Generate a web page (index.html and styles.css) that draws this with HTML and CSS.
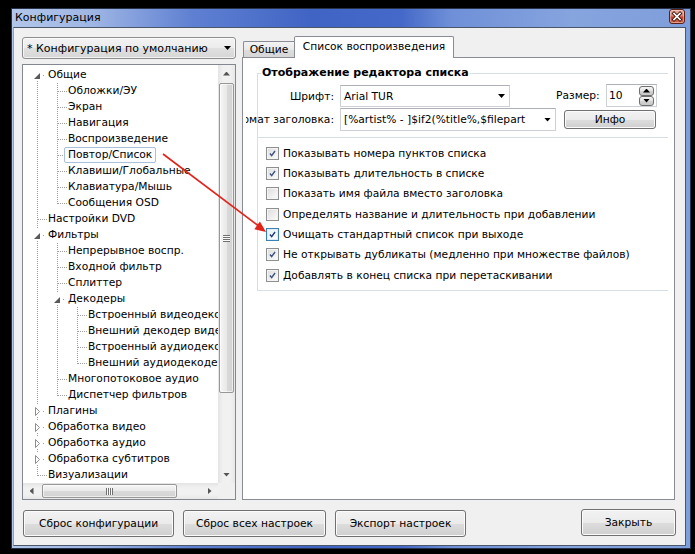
FILE: index.html
```html
<!DOCTYPE html>
<html lang="ru">
<head>
<meta charset="utf-8">
<title>Конфигурация</title>
<link rel="stylesheet" href="styles.css">
</head>
<body>
<div class="window">
  <div class="titlebar">
    <span class="title">Конфигурация</span>
    <button class="close" type="button" aria-label="Закрыть">
      <svg width="14" height="13" viewBox="0 0 14 13">
        <path d="M4 3.5 L10 9.5 M10 3.5 L4 9.5" stroke="#3b1610" stroke-width="3.4" stroke-linecap="square"/>
        <path d="M4 3.5 L10 9.5 M10 3.5 L4 9.5" stroke="#ffffff" stroke-width="1.7" stroke-linecap="square"/>
      </svg>
    </button>
  </div>

  <div class="client">
    <div class="main">
      <div class="left">
        <div class="combo">
          <span>* Конфигурация по умолчанию</span>
          <span class="arr-dn"></span>
        </div>

        <div class="tree">
          <div class="tree-body">
            <div class="node"><i class="g x top"><svg class="tri" viewBox="0 0 11 12"><rect width="11" height="12" fill="#fff"/><path d="M8 4V10H2Z" fill="#5a5a5a"/></svg></i><span class="lbl">Общие</span></div>
            <div class="node"><i class="g v"></i><i class="g t"></i><span class="lbl">Обложки/ЭУ</span></div>
            <div class="node"><i class="g v"></i><i class="g t"></i><span class="lbl">Экран</span></div>
            <div class="node"><i class="g v"></i><i class="g t"></i><span class="lbl">Навигация</span></div>
            <div class="node"><i class="g v"></i><i class="g t"></i><span class="lbl">Воспроизведение</span></div>
            <div class="node"><i class="g v"></i><i class="g t"></i><span class="lbl sel">Повтор/Список</span></div>
            <div class="node"><i class="g v"></i><i class="g t"></i><span class="lbl">Клавиши/Глобальные</span></div>
            <div class="node"><i class="g v"></i><i class="g t"></i><span class="lbl">Клавиатура/Мышь</span></div>
            <div class="node"><i class="g v"></i><i class="g l"></i><span class="lbl">Сообщения OSD</span></div>
            <div class="node"><i class="g t"></i><span class="lbl">Настройки DVD</span></div>
            <div class="node"><i class="g x"><svg class="tri" viewBox="0 0 11 12"><rect width="11" height="12" fill="#fff"/><path d="M8 4V10H2Z" fill="#5a5a5a"/></svg></i><span class="lbl">Фильтры</span></div>
            <div class="node"><i class="g v"></i><i class="g t"></i><span class="lbl">Непрерывное воспр.</span></div>
            <div class="node"><i class="g v"></i><i class="g t"></i><span class="lbl">Входной фильтр</span></div>
            <div class="node"><i class="g v"></i><i class="g t"></i><span class="lbl">Сплиттер</span></div>
            <div class="node"><i class="g v"></i><i class="g x"><svg class="tri" viewBox="0 0 11 12"><rect width="11" height="12" fill="#fff"/><path d="M8 4V10H2Z" fill="#5a5a5a"/></svg></i><span class="lbl">Декодеры</span></div>
            <div class="node"><i class="g v"></i><i class="g v"></i><i class="g t"></i><span class="lbl">Встроенный видеодекодер</span></div>
            <div class="node"><i class="g v"></i><i class="g v"></i><i class="g t"></i><span class="lbl">Внешний декодер видео</span></div>
            <div class="node"><i class="g v"></i><i class="g v"></i><i class="g t"></i><span class="lbl">Встроенный аудиодекодер</span></div>
            <div class="node"><i class="g v"></i><i class="g v"></i><i class="g l"></i><span class="lbl">Внешний аудиодекодер</span></div>
            <div class="node"><i class="g v"></i><i class="g t"></i><span class="lbl">Многопотоковое аудио</span></div>
            <div class="node"><i class="g v"></i><i class="g l"></i><span class="lbl">Диспетчер фильтров</span></div>
            <div class="node"><i class="g x"><svg class="tri" viewBox="0 0 11 12"><rect width="11" height="12" fill="#fff"/><path d="M3.5 2.5V10.5L7.5 6.5Z" fill="#fff" stroke="#8e8e8e"/></svg></i><span class="lbl">Плагины</span></div>
            <div class="node"><i class="g x"><svg class="tri" viewBox="0 0 11 12"><rect width="11" height="12" fill="#fff"/><path d="M3.5 2.5V10.5L7.5 6.5Z" fill="#fff" stroke="#8e8e8e"/></svg></i><span class="lbl">Обработка видео</span></div>
            <div class="node"><i class="g x"><svg class="tri" viewBox="0 0 11 12"><rect width="11" height="12" fill="#fff"/><path d="M3.5 2.5V10.5L7.5 6.5Z" fill="#fff" stroke="#8e8e8e"/></svg></i><span class="lbl">Обработка аудио</span></div>
            <div class="node"><i class="g x"><svg class="tri" viewBox="0 0 11 12"><rect width="11" height="12" fill="#fff"/><path d="M3.5 2.5V10.5L7.5 6.5Z" fill="#fff" stroke="#8e8e8e"/></svg></i><span class="lbl">Обработка субтитров</span></div>
            <div class="node"><i class="g l"></i><span class="lbl">Визуализации</span></div>
          </div>

          <div class="vscroll">
            <div class="sb-btn"><span class="arr-up"></span></div>
            <div class="vtrack">
              <div class="vthumb"><span class="grip-v"></span></div>
            </div>
            <div class="sb-btn"><span class="arr-down"></span></div>
          </div>

          <div class="hscroll">
            <div class="sb-btn-h"><span class="arr-left"></span></div>
            <div class="htrack">
              <div class="hthumb"><span class="grip-h"></span></div>
            </div>
            <div class="sb-btn-h"><span class="arr-right"></span></div>
          </div>
          <div class="corner"></div>
        </div>
      </div>

      <div class="right">
        <div class="tabs">
          <div class="tab">Общие</div>
          <div class="tab active">Список воспроизведения</div>
        </div>
        <div class="panel">
          <fieldset class="group">
            <legend>Отображение редактора списка</legend>
            <div class="frow frow-font">
              <div class="flabel"><span>Шрифт:</span></div>
              <div class="field field-font">
                <span class="ftext">Arial TUR</span>
                <span class="arr-dn"></span>
              </div>
              <div class="size-label">Размер:</div>
              <div class="spin">
                <span>10</span>
                <span class="spin-btns">
                  <span class="sbtn"><span class="arr-up small"></span></span>
                  <span class="sbtn"><span class="arr-down small"></span></span>
                </span>
              </div>
            </div>
            <div class="frow frow-title">
              <div class="flabel"><span>Формат заголовка:</span></div>
              <div class="field field-format">
                <span class="ftext">[%artist% - ]$if2(%title%,$filepart</span>
                <span class="arr-dn"></span>
              </div>
              <button class="btn btn-info" type="button">Инфо</button>
            </div>
          </fieldset>

          <div class="checks">
            <div class="check"><span class="cb"><svg viewBox="0 0 13 13"><path d="M3.5 6.5 L5.5 9 L9.5 3.5" fill="none" stroke="#3e5284" stroke-width="1.7"/></svg></span>Показывать номера пунктов списка</div>
            <div class="check"><span class="cb"><svg viewBox="0 0 13 13"><path d="M3.5 6.5 L5.5 9 L9.5 3.5" fill="none" stroke="#3e5284" stroke-width="1.7"/></svg></span>Показывать длительность в списке</div>
            <div class="check"><span class="cb"></span>Показать имя файла вместо заголовка</div>
            <div class="check"><span class="cb"></span>Определять название и длительность при добавлении</div>
            <div class="check"><span class="cb focus"><svg viewBox="0 0 13 13"><path d="M3.5 6.5 L5.5 9 L9.5 3.5" fill="none" stroke="#1f3a78" stroke-width="1.7"/></svg></span>Очищать стандартный список при выходе</div>
            <div class="check"><span class="cb"><svg viewBox="0 0 13 13"><path d="M3.5 6.5 L5.5 9 L9.5 3.5" fill="none" stroke="#3e5284" stroke-width="1.7"/></svg></span>Не открывать дубликаты (медленно при множестве файлов)</div>
            <div class="check"><span class="cb"><svg viewBox="0 0 13 13"><path d="M3.5 6.5 L5.5 9 L9.5 3.5" fill="none" stroke="#3e5284" stroke-width="1.7"/></svg></span>Добавлять в конец списка при перетаскивании</div>
          </div>
        </div>
      </div>
    </div>

    <div class="buttons">
      <button class="btn btn-reset" type="button">Сброс конфигурации</button>
      <button class="btn btn-reset-all" type="button">Сброс всех настроек</button>
      <button class="btn btn-export" type="button">Экспорт настроек</button>
      <button class="btn btn-close" type="button">Закрыть</button>
    </div>

    <!-- callout from the selected tree node to the option it controls -->
    <svg class="pointer" width="671" height="517" viewBox="0 0 671 517">
      <line x1="149" y1="126" x2="244" y2="197.5" stroke="#e2231a" stroke-width="1.6"/>
      <path d="M252 204 L240.3 201.2 L245.9 193.6 Z" fill="#e2231a"/>
    </svg>
  </div>
</div>
</body>
</html>
```

FILE: styles.css
```css
* {
  box-sizing: border-box;
}

html,
body {
  margin: 0;
  height: 100%;
}

body {
  background: #000;
  padding: 8px 0 0 11px;
  font: 10.7px "DejaVu Sans", "Noto Sans", sans-serif;
  color: #000;
  --dot-v: repeating-linear-gradient(to bottom, #9d9d9d 0 1px, transparent 1px 2px);
  --dot-h: repeating-linear-gradient(to right, #9d9d9d 0 1px, transparent 1px 2px);
}

button {
  font: inherit;
  color: inherit;
}

/* ---------- window frame ---------- */
.window {
  width: 680px;
  height: 541px;
  border: 1px solid #25324a;
  padding: 0 4px 2px 1px;
  display: flex;
  flex-direction: column;
  background: linear-gradient(90deg,
      #b2c6ea 0px, #9fb6e4 80px, #5f80d2 180px, #4064c4 300px,
      #4569c8 390px, #6f90d8 440px, #86a4de 560px, #7e9edb 680px);
}

.titlebar {
  height: 18px;
  flex: none;
  display: flex;
  justify-content: space-between;
  align-items: flex-start;
  padding-left: 2px;
}

.title {
  line-height: 17px;
  font-size: 11px;
}

.close {
  width: 16px;
  height: 15px;
  margin-right: 1px;
  padding: 0;
  border: 1px solid #5b2118;
  border-radius: 3px;
  display: flex;
  align-items: center;
  justify-content: center;
  background: linear-gradient(#eab1a2 0%, #d9826c 45%, #c5442a 55%, #d4674b 100%);
  box-shadow: inset 0 0 0 1px rgba(255, 220, 210, 0.45);
}

.close svg {
  display: block;
}

.client {
  flex: 1;
  position: relative;
  background: #f0f0f0;
  border: 1px solid #4a5669;
  border-left-color: #8ea4cf;
  padding: 8px 9px 0 8px;
}

.main {
  display: flex;
  gap: 6px;
}

/* ---------- left column ---------- */
.left {
  width: 214px;
  margin-top: 1px;
  display: flex;
  flex-direction: column;
  gap: 5px;
}

.combo {
  height: 22px;
  border: 1px solid #8c8d8f;
  border-radius: 3px;
  padding: 0 4px 0 4px;
  display: flex;
  align-items: center;
  justify-content: space-between;
  background: linear-gradient(#f3f3f3 0%, #ececec 50%, #e0e0e0 51%, #d6d6d6 100%);
  box-shadow: inset 0 0 0 1px rgba(255, 255, 255, 0.7);
  font-size: 11px;
}

.arr-dn {
  width: 7px;
  height: 4px;
  flex: none;
  background: #000;
  clip-path: polygon(0 0, 100% 0, 50% 100%);
}

.tree {
  height: 436px;
  border: 1px solid #828790;
  background: #fff;
  display: grid;
  grid-template-columns: 195px 17px;
  grid-template-rows: 418px 16px;
}

.tree-body {
  grid-column: 1;
  grid-row: 1;
  overflow: hidden;
  padding: 2px 0 0 4px;
}

.node {
  height: 16px;
  display: flex;
  align-items: stretch;
  white-space: nowrap;
}

.g {
  width: 20px;
  height: 16px;
  flex: none;
  background-repeat: no-repeat;
}

.v {
  background-image: var(--dot-v);
  background-size: 1px 16px;
  background-position: 10px 0;
}

.t {
  background-image: var(--dot-v), var(--dot-h);
  background-size: 1px 16px, 9px 1px;
  background-position: 10px 0, 11px 8px;
}

.l {
  background-image: var(--dot-v), var(--dot-h);
  background-size: 1px 9px, 9px 1px;
  background-position: 10px 0, 11px 8px;
}

.x {
  background-image: var(--dot-v), var(--dot-h);
  background-size: 1px 16px, 1px 1px;
  background-position: 10px 0, 16px 8px;
}

.x.top {
  background-size: 1px 8px, 1px 1px;
  background-position: 10px 8px, 16px 8px;
}

.tri {
  display: block;
  width: 11px;
  height: 12px;
  margin: 2px 0 0 5px;
}

.lbl {
  height: 16px;
  line-height: 14px;
  margin-left: -3px;
  padding: 0 3px;
  border: 1px solid transparent;
  border-radius: 2px;
}

.lbl.sel {
  border-color: #a9bfdc;
  background: #fcfdfe;
}

/* scrollbars */
.vscroll {
  grid-column: 2;
  grid-row: 1;
  display: flex;
  flex-direction: column;
  background: linear-gradient(90deg, #e4e4e4, #f1f1f1 30%, #f1f1f1 70%, #e8e8e8);
}

.sb-btn {
  height: 17px;
  flex: none;
  display: flex;
  align-items: center;
  justify-content: center;
}

.vtrack {
  flex: 1;
  padding-top: 1px;
}

.vthumb {
  height: 310px;
  margin: 0 1px;
  border: 1px solid #979797;
  border-radius: 2px;
  display: flex;
  align-items: center;
  justify-content: center;
  background: linear-gradient(90deg, #f5f5f5, #e9e9e9 50%, #dadada 51%, #d2d2d2);
  box-shadow: inset 0 0 0 1px rgba(255, 255, 255, 0.6);
}

.grip-v {
  width: 7px;
  height: 7px;
  background: repeating-linear-gradient(to bottom, #707070 0 1px, #fafafa 1px 2px);
}

.arr-up {
  width: 7px;
  height: 4px;
  background: #555;
  clip-path: polygon(50% 0, 100% 100%, 0 100%);
}

.arr-down {
  width: 7px;
  height: 4px;
  background: #555;
  clip-path: polygon(0 0, 100% 0, 50% 100%);
}

.hscroll {
  grid-column: 1;
  grid-row: 2;
  display: flex;
  background: linear-gradient(#e4e4e4, #f1f1f1 30%, #f1f1f1 70%, #e8e8e8);
}

.sb-btn-h {
  width: 17px;
  flex: none;
  display: flex;
  align-items: center;
  justify-content: center;
}

.arr-left {
  width: 4px;
  height: 7px;
  background: #555;
  clip-path: polygon(0 50%, 100% 0, 100% 100%);
}

.arr-right {
  width: 4px;
  height: 7px;
  background: #555;
  clip-path: polygon(0 0, 100% 50%, 0 100%);
}

.htrack {
  flex: 1;
  padding: 1px 0 1px 2px;
}

.hthumb {
  width: 135px;
  height: 100%;
  border: 1px solid #979797;
  border-radius: 2px;
  display: flex;
  align-items: center;
  justify-content: center;
  background: linear-gradient(#f5f5f5, #e9e9e9 50%, #dadada 51%, #d2d2d2);
  box-shadow: inset 0 0 0 1px rgba(255, 255, 255, 0.6);
}

.grip-h {
  width: 7px;
  height: 7px;
  background: repeating-linear-gradient(to right, #707070 0 1px, #fafafa 1px 2px);
}

.corner {
  grid-column: 2;
  grid-row: 2;
  background: #f0f0f0;
}

/* ---------- right column: tabs ---------- */
.right {
  width: 433px;
  display: flex;
  flex-direction: column;
}

.tabs {
  height: 22px;
  margin-bottom: -1px;
  padding-left: 1px;
  display: flex;
  align-items: flex-end;
  position: relative;
  z-index: 1;
}

.tab {
  width: 51px;
  height: 16px;
  margin-bottom: 1px;
  line-height: 15px;
  text-align: center;
  border: 1px solid #898c95;
  border-bottom: none;
  border-right: none;
  border-radius: 2px 0 0 0;
  background: linear-gradient(#f3f3f3, #e9e9e9 50%, #dcdcdc 51%, #d7d7d7);
}

.tab.active {
  width: 160px;
  height: 22px;
  margin-bottom: 0;
  line-height: 19px;
  border-right: 1px solid #898c95;
  border-radius: 2px 2px 0 0;
  background: #fff;
}

.panel {
  height: 443px;
  border: 1px solid #898c95;
  background: #fff;
}

/* ---------- group box with the font settings ---------- */
.group {
  margin: 8px 0 0 14px;
  width: 411px;
  padding: 0 0 6px 0;
  border: 1px solid #d5dfe5;
  border-right: none;
  min-width: 0;
}

.group legend {
  margin-left: 3px;
  padding: 0 1px;
  font-weight: bold;
  font-size: 11px;
  line-height: 14px;
}

.frow {
  height: 23px;
  display: flex;
}

.frow-font {
  margin-top: 4px;
  align-items: flex-end;
}

.frow-title {
  margin-top: 1px;
  align-items: center;
}

.flabel {
  width: 88px;
  margin-left: -12px;
  margin-right: 2px;
  height: 22px;
  display: flex;
  align-items: center;
  justify-content: flex-end;
  overflow: hidden;
  white-space: nowrap;
}

.field {
  margin-left: 4px;
  border: 1px solid #cdd0d5;
  border-top-color: #adb0b7;
  background: #fff;
  display: flex;
  align-items: center;
  padding: 0 4px 0 3px;
}

.field-font {
  width: 170px;
  height: 22px;
}

.field-format {
  width: 216px;
  height: 23px;
}

.ftext {
  flex: 1;
  overflow: hidden;
  white-space: nowrap;
  margin-right: 5px;
}

.size-label {
  width: 50px;
  height: 22px;
  line-height: 22px;
  margin-left: 46px;
}

.spin {
  width: 51px;
  height: 23px;
  border: 1px solid #cdd0d5;
  border-top-color: #adb0b7;
  background: #fff;
  display: flex;
  align-items: center;
  justify-content: space-between;
  padding: 0 2px 0 2px;
}

.spin-btns {
  display: flex;
  flex-direction: column;
}

.sbtn {
  width: 15px;
  height: 10px;
  border: 1px solid #6f6f6f;
  border-radius: 3px;
  display: flex;
  align-items: center;
  justify-content: center;
  background: linear-gradient(#f4f4f4, #e2e2e2 50%, #d2d2d2 51%, #c9c9c9);
}

.arr-up.small,
.arr-down.small {
  background: #000;
}

/* ---------- buttons ---------- */
.btn {
  height: 27px;
  padding: 0;
  border: 1px solid #707070;
  border-radius: 3px;
  background: linear-gradient(#f2f2f2 0%, #ebebeb 50%, #dddddd 51%, #cfcfcf 100%);
  box-shadow: inset 0 0 0 1px #fbfbfb;
  text-align: center;
}

.btn-info {
  width: 92px;
  height: 19px;
  margin-left: 8px;
  line-height: 15px;
}

/* ---------- checkbox list ---------- */
.checks {
  margin-left: 14px;
  width: 411px;
  border-left: 1px solid #d5dfe5;
  border-bottom: 1px solid #d5dfe5;
  padding: 5px 0 5px 8px;
}

.check {
  height: 20.33px;
  display: flex;
  align-items: center;
  white-space: nowrap;
}

.cb {
  width: 13px;
  height: 13px;
  margin-right: 4px;
  flex: none;
  border: 1px solid #8e8f8f;
  background: linear-gradient(135deg, #dcdcdc, #fdfdfd);
  box-shadow: inset 0 0 0 1px #f4f4f4;
}

.cb svg {
  display: block;
  width: 11px;
  height: 11px;
}

.cb.focus {
  border-color: #3c7fb1;
  background: linear-gradient(135deg, #e3f1fb, #ffffff);
  box-shadow: inset 0 0 0 1px #deecf8;
}

/* ---------- bottom button row ---------- */
.buttons {
  margin-top: 10px;
  padding-left: 1px;
  display: flex;
  align-items: flex-start;
}

.btn-reset {
  width: 151px;
}

.btn-reset-all {
  width: 143px;
  margin-left: 9px;
}

.btn-export {
  width: 131px;
  margin-left: 9px;
}

.btn-close {
  width: 95px;
  margin-left: auto;
  margin-top: -1px;
}

.pointer {
  position: absolute;
  left: 0;
  top: 0;
  pointer-events: none;
}
```
